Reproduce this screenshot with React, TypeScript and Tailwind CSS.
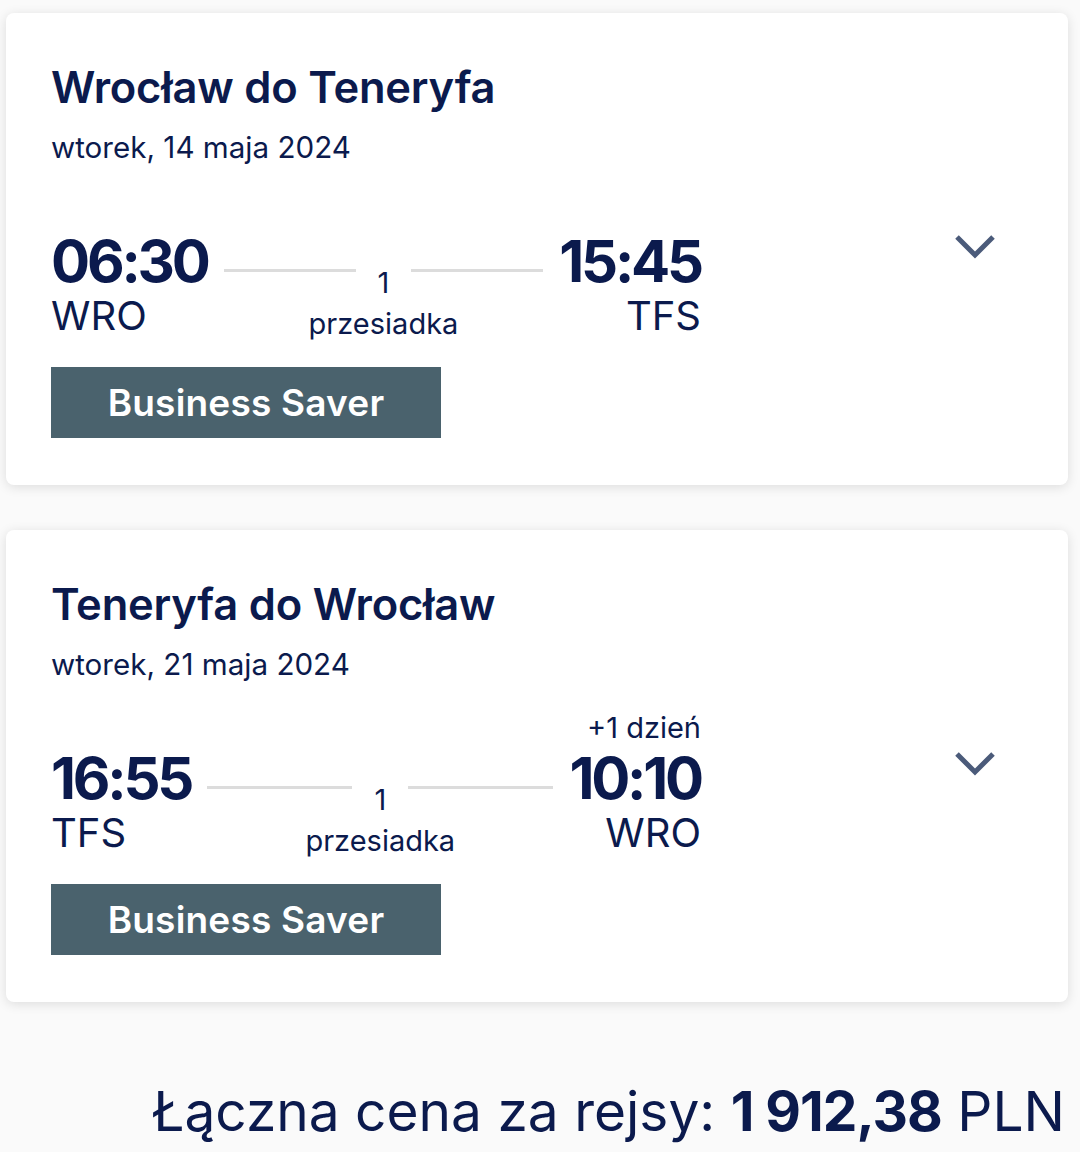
import React from "react";

type Flight = {
  title: string;
  date: string;
  dep: string;
  depCode: string;
  arr: string;
  arrCode: string;
  nextDay?: boolean;
};

const flights: Flight[] = [
  {
    title: "Wrocław do Teneryfa",
    date: "wtorek, 14 maja 2024",
    dep: "06:30",
    depCode: "WRO",
    arr: "15:45",
    arrCode: "TFS",
  },
  {
    title: "Teneryfa do Wrocław",
    date: "wtorek, 21 maja 2024",
    dep: "16:55",
    depCode: "TFS",
    arr: "10:10",
    arrCode: "WRO",
    nextDay: true,
  },
];

const Chevron = () => (
  <svg width="42" height="26" viewBox="0 0 42 26" fill="none">
    <path d="M3 3 L21 21 L39 3" stroke="#4b5b7a" strokeWidth="5" strokeLinejoin="miter" />
  </svg>
);

const FlightCard = ({ f }: { f: Flight }) => {
  return (
    <div className="bg-white rounded-lg shadow-[0_2px_12px_rgba(0,0,0,0.12)] pl-[45px] pr-[70px] pt-[50px] pb-[47px]">
      <h2 className="text-[43.5px] leading-[48px] font-semibold tracking-[-0.2px]">{f.title}</h2>
      <p className="text-[29.6px] leading-[36px] mt-[18px]">{f.date}</p>

      <div className="flex items-start justify-between mt-[31px]">
        <div className="w-[650px]">
          <div className="flex items-start justify-end h-[36px]">
            {f.nextDay && <span className="text-[29px] leading-[30px]">+1 dzień</span>}
          </div>
          <div className="flex items-start">
            <div className="flex flex-col">
              <span className="text-[58px] leading-[58px] font-bold tracking-[-3.2px]">{f.dep}</span>
              <span className="text-[40px] leading-[44px] mt-[4px]">{f.depCode}</span>
            </div>
            <div className="flex-1 flex flex-col items-center px-[16px] pt-[37px]">
              <div className="flex items-start w-full">
                <div className="flex-1 h-[3px] bg-[#dcdcdc]" />
                <span className="text-[29px] leading-[32px] px-[22px] mt-[-2px]">1</span>
                <div className="flex-1 h-[3px] bg-[#dcdcdc]" />
              </div>
              <span className="text-[29px] leading-[36px] mt-[7px]">przesiadka</span>
            </div>
            <div className="flex flex-col items-end">
              <span className="text-[58px] leading-[58px] font-bold tracking-[-3.2px]">{f.arr}</span>
              <span className="text-[40px] leading-[44px] mt-[4px]">{f.arrCode}</span>
            </div>
          </div>
        </div>
        <div className="pt-[38px] pr-[2px]">
          <Chevron />
        </div>
      </div>

      <div className="mt-[25px] w-[390px] h-[71px] bg-[#4a626d] flex items-center justify-center">
        <span className="text-white text-[37px] font-semibold tracking-[0.2px]">Business Saver</span>
      </div>
    </div>
  );
};

export default function App() {
  return (
    <div
      className="min-h-[1152px] bg-[#fafafa] px-[6px] pt-[13px] text-[#0b1a4d] w-[1080px]"
      style={{ fontFamily: "Inter, 'Noto Sans', sans-serif" }}
    >
      <div className="flex flex-col gap-[45px] pr-[6px]">
        {flights.map((f) => (
          <FlightCard key={f.title} f={f} />
        ))}
      </div>
      <div className="flex justify-end items-baseline pr-[9px] mt-[78px] text-[55px] leading-[62px]">
        <span>Łączna cena za rejsy:&nbsp;</span>
        <span className="font-bold tracking-[-1px]">1 912,38</span>
        <span>&nbsp;PLN</span>
      </div>
    </div>
  );
}
